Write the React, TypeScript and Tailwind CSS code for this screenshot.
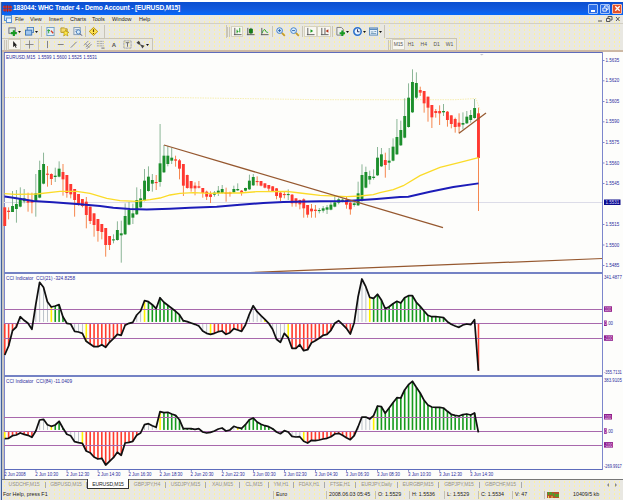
import React from "react";

type Candle = [number, number, number, number];

// Each row: high, body top, body bottom, low, in thirds of a pixel; a leading minus on the high marks a falling candle.
const early: Candle[] = [
  [-262, 262, 318, 318], [-262, 272, 276, 298], [213, 258, 276, 276], [210, 252, 267, 308], [202, 235, 260, 262],
  [207, 235, 244, 250], [-218, 240, 248, 275], [-218, 240, 248, 280], [162, 220, 245, 290], [122, 150, 233, 235],
  [98, 132, 191, 193], [-138, 161, 164, 200], [-160, 162, 177, 195], [143, 167, 171, 186], [124, 146, 170, 172],
  [-132, 156, 178, 227], [-165, 165, 219, 233], [-192, 192, 223, 235], [-207, 207, 240, 290], [-222, 222, 252, 257],
  [-237, 237, 258, 262], [-231, 245, 285, 325], [-260, 260, 303, 312], [-280, 280, 315, 350], [-297, 297, 333, 365],
  [-312, 312, 336, 358], [-324, 324, 375, 410], [-348, 348, 375, 390], [343, 358, 361, 370], [304, 330, 360, 362],
  [302, 340, 346, 428], [250, 288, 343, 345], [246, 270, 314, 316], [251, 280, 293, 312], [202, 240, 283, 285],
  [207, 235, 262, 264], [147, 182, 242, 244], [139, 170, 213, 215], [162, 180, 191, 215], [-165, 186, 189, 210],
  [12, 130, 186, 200], [75, 107, 157, 159], [78, 107, 132, 139], [83, 113, 122, 132], [-107, 118, 122, 140],
  [-117, 121, 146, 178], [-132, 132, 197, 228], [-164, 165, 204, 206], [-183, 183, 205, 215], [-187, 197, 205, 226],
  [-183, 199, 203, 205], [-204, 204, 219, 233], [-212, 215, 230, 240], [-214, 223, 231, 249], [213, 218, 224, 230],
  [198, 212, 219, 228], [195, 207, 219, 221], [-203, 217, 222, 245], [-215, 217, 222, 230], [197, 207, 217, 219],
  [190, 207, 211, 213], [-210, 212, 219, 227], [203, 204, 212, 214], [164, 182, 208, 210], [162, 171, 196, 198],
  [-169, 183, 186, 197], [-183, 183, 197, 199], [-190, 190, 203, 205], [-195, 195, 206, 215], [-198, 199, 213, 215],
  [-204, 205, 228, 238], [-215, 218, 233, 243], [-213, 222, 225, 235], [208, 222, 225, 240], [-222, 224, 250, 260],
  [-235, 235, 250, 260], [-239, 240, 253, 268], [-235, 238, 265, 293], [-255, 255, 284, 293], [-252, 266, 274, 293],
  [-255, 269, 273, 293], [264, 270, 273, 280], [258, 265, 272, 278], [255, 262, 269, 282],
];
const late: Candle[] = [
  [455, 464, 479, 481], [438, 457, 470, 472], [443, 448, 458, 463], [445, 449, 452, 457], [-441, 449, 464, 476],
  [-455, 458, 478, 494], [452, 460, 465, 470], [395, 430, 466, 468], [343, 375, 450, 455], [350, 366, 413, 415],
  [362, 378, 389, 403], [358, 380, 384, 389], [291, 323, 376, 378], [294, 313, 349, 351], [-308, 330, 345, 383],
  [294, 332, 338, 360], [265, 290, 332, 334], [207, 261, 313, 315], [212, 240, 286, 288], [145, 198, 263, 265],
  [100, 143, 231, 233], [58, 96, 187, 189], [67, 99, 143, 147], [-110, 120, 128, 138], [-123, 123, 160, 188],
  [-140, 140, 173, 215], [-165, 165, 202, 234], [-177, 183, 189, 203], [-166, 183, 190, 225], [162, 183, 187, 198],
  [-183, 185, 210, 230], [-196, 196, 222, 235], [-203, 207, 231, 248], [-190, 218, 230, 250], [187, 219, 224, 238],
  [183, 200, 220, 222], [180, 195, 210, 218], [147, 174, 204, 206], [-173, 190, 324, 483],
];
const candles = [
  ...early.map((c) => ({ c, base: 120 })),
  ...late.map((c) => ({ c, base: 50 })),
];
const cx = (i: number) => 4.7 + 3.883 * i;

const cci21 = [
  255, 228, 182, 171, 140, 151, 160, 178, 103, 37, 52, 95, 111, 108, 104, 140, 160, 162, 184, 186, 190, 214, 222, 230,
  230, 224, 232, 217, 206, 193, 196, 166, 160, 157, 135, 123, 92, 95, 104, 116, 83, 97, 106, 115, 124, 134, 152, 155,
  159, 163, 168, 183, 190, 193, 190, 185, 183, 193, 188, 176, 180, 184, 165, 133, 107, 125, 137, 148, 160, 178, 208,
  217, 190, 203, 235, 235, 224, 242, 239, 218, 212, 205, 196, 193, 181, 160, 152, 163, 175, 192, 158, 80, 27, 50, 82,
  85, 73, 90, 116, 110, 101, 94, 99, 83, 77, 77, 97, 109, 123, 136, 140, 140, 141, 143, 155, 163, 168, 172, 165, 162,
  164, 149, 302,
];
const cci84 = [
  191, 190, 182, 180, 174, 178, 181, 187, 168, 135, 133, 149, 154, 150, 139, 159, 178, 182, 200, 203, 205, 228, 233,
  246, 252, 250, 270, 259, 248, 232, 241, 204, 202, 199, 181, 174, 149, 146, 152, 157, 110, 113, 112, 117, 121, 134,
  161, 161, 161, 163, 161, 171, 174, 172, 168, 162, 159, 168, 165, 154, 158, 160, 149, 134, 129, 141, 148, 152, 155,
  161, 171, 176, 167, 171, 184, 186, 185, 199, 204, 196, 197, 195, 192, 190, 185, 177, 175, 181, 188, 194, 182, 155,
  126, 126, 132, 122, 93, 95, 115, 99, 83, 68, 69, 45, 29, 19, 37, 54, 76, 90, 96, 97, 97, 99, 109, 118, 121, 123,
  119, 117, 120, 114, 172,
];
const gray = "#b4bcc4";
const red = "#ff3a2c";
const green = "#159a1c";
const yellow = "#fff200";
// Run-length colouring of the histograms: [last index of the run, colour]
const runs21: [number, string][] = [
  [3, red], [11, gray], [12, yellow], [15, green], [20, gray], [21, yellow], [32, red], [35, gray], [36, yellow],
  [48, green], [52, gray], [53, yellow], [61, red], [66, gray], [67, yellow], [72, gray], [73, yellow], [85, red],
  [86, gray], [89, red], [93, gray], [94, yellow], [113, green], [121, gray], [122, red],
];
const runs84: [number, string][] = [
  [0, yellow], [7, red], [11, gray], [12, yellow], [15, green], [19, gray], [20, yellow], [34, red], [39, gray],
  [40, yellow], [49, green], [59, gray], [60, yellow], [69, green], [76, gray], [77, yellow], [90, red], [94, gray],
  [95, yellow], [121, green], [122, gray],
];
const colorAt = (runs: [number, string][], i: number) => (runs.find((r) => i <= r[0]) ?? runs[0])[1];

function Label({ x, y, w, children, fill = "#2a2a9c", size = 5.4 }: {
  x: number; y: number; w: number; children: string; fill?: string; size?: number;
}) {
  return (
    <text x={x} y={y} textLength={w} lengthAdjust="spacingAndGlyphs" fontSize={size} fill={fill} xmlSpace="preserve">
      {children}
    </text>
  );
}

function Cci({ values, runs, base, zero, hi, lo }: {
  values: number[]; runs: [number, string][]; base: number; zero: number; hi: number; lo: number;
}) {
  const z = base + zero / 3;
  return (
    <g>
      {values.map((v, i) => {
        const c = colorAt(runs, i);
        const up = v < zero;
        const y = base + v / 3;
        const start = up ? z - 1.4 : z + 0.7;
        const h = up ? start - y : y - start;
        if (h <= 0) return null;
        return <rect key={i} x={cx(i) - (c === gray ? 0.4 : 0.75)} y={up ? y : start} width={c === gray ? 0.9 : 1.6} height={h} fill={c} />;
      })}
      {[hi, zero, lo].map((l) => (
        <rect key={l} x={4} width={598.5} y={Math.floor(base + l / 3)} height={1} fill="#a868ac" />
      ))}
      <polyline
        points={values.map((v, i) => `${cx(i).toFixed(1)},${(base + v / 3).toFixed(1)}`).join(" ")}
        fill="none" stroke="#111" strokeWidth={1.75} strokeLinejoin="round"
      />
    </g>
  );
}

const prices: [string, number][] = [
  ["1.5635", 60], ["1.5620", 80.3], ["1.5605", 101], ["1.5590", 121.3], ["1.5575", 142], ["1.5560", 162.5],
  ["1.5545", 183], ["1.5515", 224], ["1.5500", 244.5], ["1.5485", 265],
];
const times = [
  "2 Jun 2008", "2 Jun 10:30", "2 Jun 12:30", "2 Jun 14:30", "2 Jun 16:30", "2 Jun 18:30", "2 Jun 20:30", "2 Jun 22:30",
  "3 Jun 00:30", "3 Jun 02:30", "3 Jun 04:30", "3 Jun 06:30", "3 Jun 08:30", "3 Jun 10:30", "3 Jun 12:30", "3 Jun 14:30",
];

function Chart() {
  return (
    <svg className="block h-[427px] w-[621px] shrink-0 overflow-visible" viewBox="2 52 621 427" fontFamily="'Liberation Sans', Arial, sans-serif">
      <rect x={2} y={52} width={621} height={427} fill="#fdfdfb" />
      <rect x={2} y={52} width={2} height={427} fill="#c6c4c0" />
      <rect x={4} y={52} width={1} height={427} fill="#7c86cc" />
      <rect x={4} y={52} width={599} height={1} fill="#5e6cbc" />
      <rect x={4} y={202} width={599} height={1} fill="#dcdce8" />
      <path d="M5 97.5H170L320 99.7H455L476 98.5L480 110" fill="none" stroke="#f4eaa0" strokeWidth={0.8} strokeDasharray="1.5 1" />
      {candles.map(({ c, base }, i) => {
        const down = c[0] < 0;
        const y = (v: number) => base + v / 3;
        const x = cx(i);
        return (
          <g key={i}>
            <rect x={x - 0.4} y={y(Math.abs(c[0]))} width={0.9} height={(c[3] - Math.abs(c[0])) / 3} fill={down ? "#f57a3c" : "#7fae8c"} />
            <rect x={x - 1.4} y={y(c[1])} width={2.9} height={Math.max(1.1, (c[2] - c[1]) / 3)} fill={down ? "#ff3830" : "#1c8f2c"} />
          </g>
        );
      })}
      <path d="M479.9 54L483.6 54L481.8 55.6Z" fill="#c4c4cc" />
      <polyline
        points="4.5,193.7 15,194.3 36.7,194 60,191.3 76.7,191.3 90,193.3 106.7,198.3 120,200.7 136.7,201.3 150,199.7 160,198 170,195 180,193.3 193.3,192.7 210,193.3 223.3,193 240,193 256.7,191.7 286.7,191.3 300,193 320,195.3 346.7,196.7 360,196 373.3,194.7 380,192.7 393.3,189.7 403.3,185.7 420,175.7 440,167.3 460,162.3 478.5,157.7"
        fill="none" stroke="#fbdb28" strokeWidth={1.3}
      />
      <polyline
        points="4.5,196.5 13.3,197.7 33.3,201 53.3,202.3 80,204.3 100,206 113.3,207.7 130,209 146.7,209.5 170,208.7 190,207.7 216.7,206.7 240,204.7 263.3,203 283.3,202 320,201.3 346.7,201 376.7,199 400,197 408.3,196.7 430,191.7 453.3,187 478.5,183.4"
        fill="none" stroke="#1c1cb8" strokeWidth={1.9}
      />
      <g stroke="#96582f" strokeWidth={1.25}>
        <line x1={164} y1={145} x2={443} y2={227.7} />
        <line x1={459} y1={133.3} x2={486} y2={113} />
        <line x1={250} y1={272.5} x2={602.5} y2={258.5} />
      </g>
      <Cci values={cci21} runs={runs21} base={270} zero={160} hi={118} lo={205} />
      <Cci values={cci84} runs={runs84} base={375} zero={169} hi={127} lo={211} />
      <rect x={4} y={272} width={599} height={2} fill="#7482c4" />
      <rect x={4} y={375} width={599} height={2} fill="#7482c4" />
      <rect x={4} y={469} width={599} height={1} fill="#5e6cbc" />
      <rect x={602} y={52} width={1} height={418} fill="#7c86cc" />

      <Label x={6} y={58.6} w={91}>{"EURUSD,M15  1.5599 1.5600 1.5525 1.5531"}</Label>
      <Label x={6} y={280.3} w={69}>{"CCI Indicator  CCI(21) -324.8258"}</Label>
      <Label x={6} y={383.3} w={66}>{"CCI Indicator  CCI(84) -11.0409"}</Label>
      {prices.map(([p, y]) => (
        <g key={p}>
          <rect x={603} y={y} width={1.5} height={1} fill="#7c86cc" />
          <Label x={605.5} y={y + 2.1} w={13.8}>{p}</Label>
        </g>
      ))}
      <rect x={604} y={199.5} width={16.5} height={5.5} fill="#0c0c8c" />
      <Label x={605.5} y={204.2} w={13.8} fill="#d8d8ff" size={5}>1.5531</Label>
      <Label x={604} y={279} w={17.8} size={5}>341.4877</Label>
      <Label x={604} y={374} w={17.8} size={5}>-355.7131</Label>
      <Label x={604} y={381.8} w={17.8} size={5}>383.9105</Label>
      <Label x={604} y={468} w={17.8} size={5}>-269.9917</Label>
      {[309, 416.7].map((y) => (
        <g key={y}>
          <rect x={604} y={y - 2.7} width={8} height={5.5} fill="#8c1c8c" />
          <Label x={604.7} y={y + 1.8} w={6.4} fill="#f4d8f4" size={5}>100</Label>
        </g>
      ))}
      {[338, 444.8].map((y) => (
        <g key={y}>
          <rect x={604} y={y - 2.7} width={9} height={5.5} fill="#8c1c8c" />
          <Label x={604.5} y={y + 1.8} w={8} fill="#f4d8f4" size={5}>-100</Label>
        </g>
      ))}
      {[323.2, 431].map((y) => (
        <g key={y}>
          <rect x={604} y={y - 2.7} width={2.8} height={5.5} fill="#8c1c8c" />
          <Label x={604.2} y={y + 1.8} w={2.4} fill="#f4d8f4" size={5}>0</Label>
          <Label x={607} y={y + 1.8} w={6}>.00</Label>
        </g>
      ))}
      {times.map((t, i) => (
        <g key={t}>
          <rect x={4.5 + i * 31.06} y={470} width={0.8} height={1.8} fill="#5e6cbc" />
          <Label x={i ? 4.2 + i * 31.06 : 4.2} y={476.2} w={i ? 23 : 21.5}>{t}</Label>
        </g>
      ))}
    </svg>
  );
}

function Icon({ w, children, on = false, arrow = false }: { w: number; children: React.ReactNode; on?: boolean; arrow?: boolean }) {
  return (
    <div className={`flex h-[11px] shrink-0 items-center justify-center ${on ? "border border-[#d6d2c0] bg-[#f8f7f2]" : ""}`} style={{ width: w }}>
      <svg viewBox="0 0 10 10" className="h-[9px] w-[9px] shrink-0 overflow-visible" fill="none" strokeWidth={1}>{children}</svg>
      {arrow && <svg viewBox="0 0 3 2" className="ml-px h-[2px] w-[3px] shrink-0"><path d="M0 0H3L1.5 2Z" fill="#111" /></svg>}
    </div>
  );
}
const Sep = () => <div className="mx-px h-[11px] w-px shrink-0 bg-[#c9c5b6]" />;
const Grip = () => <div className="mr-px h-[10px] w-[3px] shrink-0 border-x border-[#c9c5b6]" />;

function Axes({ children }: { children: React.ReactNode }) {
  return <><path d="M2 1V9M1 8.5H9.5" stroke="#555" />{children}</>;
}

function ToolbarOne() {
  return (
    <div className="flex h-[13px] items-center">
      <div className="flex h-[13px] w-[103px] shrink-0 items-center border-r border-[#c9c5b6] pl-1">
        <Icon w={17} arrow><rect x={1} y={1} width={7} height={6} fill="#dfeee0" stroke="#667" /><path d="M6.5 3.5V10M3.2 6.8H9.8" stroke="#179a22" strokeWidth={2.4} /></Icon>
        <Icon w={17} arrow><rect x={2.5} y={0.5} width={7} height={5.5} fill="#cfe2f6" stroke="#4a80bd" /><rect x={0.5} y={3.5} width={7} height={5.5} fill="#9fc6ee" stroke="#3a70b0" /></Icon>
        <Sep />
        <Icon w={15}><rect x={1} y={0.5} width={8} height={9} fill="#e5f1fa" stroke="#6b9ac4" /><path d="M3 7V3M1.5 4.5L3 3L4.5 4.5" stroke="#179a22" /><path d="M5.5 4L8 7" stroke="#d63a22" strokeWidth={1.5} /></Icon>
        <Icon w={13}><path d="M1 1H5L6 2H8V6H1Z" fill="#f5da6c" stroke="#b49524" /><path d="M6.5 3L7.5 5.5L10 5.8L8 7.3L8.8 10L6.5 8.5L4 10L4.8 7.3L3 5.8L5.5 5.5Z" fill="#ffe94a" stroke="#b08f00" strokeWidth={0.7} /></Icon>
        <Icon w={13}><rect x={1} y={0.5} width={7} height={8} fill="#e6edf4" stroke="#8098b0" /><path d="M2.5 3H7M2.5 5H5" stroke="#8098b0" /><circle cx={6} cy={5.5} r={2.3} fill="#d5eafa" stroke="#4a80bd" /><path d="M8 7.5L10 9.7" stroke="#446" /></Icon>
        <Sep />
        <Icon w={13}><path d="M5 0.5L9.7 5L5 9.5L0.3 5Z" fill="#ffe34e" stroke="#b98e00" /><path d="M5 2.4V5.6M5 6.6V7.8" stroke="#6b4a00" strokeWidth={1.3} /></Icon>
      </div>
      <div className="w-[121px] shrink-0" />
      <div className="flex h-[13px] w-[159px] shrink-0 items-center border-x border-[#c9c5b6]">
        <Grip />
        <Icon w={12} on><Axes><path d="M4.5 7V3M7.5 6V1M4.5 5H6" stroke="#159a1c" /></Axes></Icon>
        <Icon w={14}><Axes><rect x={4} y={2.5} width={3} height={4} fill="#159a1c" stroke="#126a18" /><path d="M5.5 1V8" stroke="#126a18" /></Axes></Icon>
        <Icon w={14}><Axes><path d="M2.5 6.5C4 2 5.5 2 6.3 4.5C7 6 8 6 9 6" stroke="#159a1c" /></Axes></Icon>
        <Sep />
        <Icon w={13}><path d="M6.5 6.5L9.8 9.8" stroke="#c89c28" strokeWidth={2} /><circle cx={4} cy={4} r={3.2} fill="#d9edfc" stroke="#3a78c8" /><path d="M2.3 4H5.7M4 2.3V5.7" stroke="#225ca8" /></Icon>
        <Icon w={14}><path d="M6.5 6.5L9.8 9.8" stroke="#c89c28" strokeWidth={2} /><circle cx={4} cy={4} r={3.2} fill="#d9edfc" stroke="#3a78c8" /><path d="M2.3 4H5.7" stroke="#225ca8" /></Icon>
        <Sep />
        <Icon w={13} on><Axes><path d="M5 2.5L8 4.5L5 6.5Z" fill="#159a1c" /></Axes></Icon>
        <Icon w={14} on><Axes><path d="M5.5 1V8" stroke="#555" /><path d="M9.3 2.5L6.2 4.5L9.3 6.5Z" fill="#b5331c" /></Axes></Icon>
        <Sep />
        <Icon w={17} arrow><path d="M1 0.5H6L8 2.5V9H1Z" fill="#eee" stroke="#777" /><path d="M7 4V10M4 7H10" stroke="#179a22" strokeWidth={2.2} /></Icon>
        <Icon w={16} arrow><circle cx={5} cy={5} r={4.1} fill="#e8f4ff" stroke="#2d71cc" strokeWidth={1.7} /><path d="M5 2.5V5.3H7.2" stroke="#225" /></Icon>
        <Icon w={17} arrow><rect x={0.5} y={1} width={9} height={8} fill="#e9f2fb" stroke="#5789bb" /><path d="M1 2.5H9" stroke="#5789bb" strokeWidth={1.6} /><path d="M2 5.5H5M2 7.3H8M6 5H8" stroke="#6c96b5" /></Icon>
      </div>
    </div>
  );
}

function ToolbarTwo() {
  return (
    <div className="flex h-[12px] items-center text-[5px] text-[#555]">
      <div className="flex h-[12px] w-[151px] shrink-0 items-center border-r border-t border-[#c9c5b6] pl-0.5">
        <Grip />
        <Icon w={13} on><path d="M3.5 1V8L5.2 6.5L6.5 9L7.3 8.6L6.2 6H8Z" fill="#222" /></Icon>
        <Icon w={16}><path d="M5 0.5V9.5M0.5 5H9.5" stroke="#777" strokeWidth={0.9} /></Icon>
        <Sep />
        <Icon w={14}><path d="M5 1V9" stroke="#777" /></Icon>
        <Icon w={13}><path d="M2 5H8.5" stroke="#777" /></Icon>
        <Icon w={13}><path d="M2 8.5L8.5 2" stroke="#777" /></Icon>
        <Icon w={14}><path d="M1 6L6 1M3 8L8 3M4 10L9.5 4.5M2.5 4L7 8.5" stroke="#888" /></Icon>
        <Icon w={13}><path d="M1 1.5H9M1 4H9M1 6.5H9" stroke="#888" strokeDasharray="1 .6" /><path d="M6 9H9.5" stroke="#666" /></Icon>
        <div className="flex w-[14px] justify-center text-[6px] font-bold">A</div>
        <Icon w={12}><rect x={1} y={1} width={8} height={8} stroke="#888" strokeDasharray="1 .6" /><path d="M3 3H7M5 3V7.5" stroke="#666" /></Icon>
        <Icon w={19} arrow><path d="M0.5 3L3 0.7L5 3.5L3 5Z" fill="#444" /><path d="M5 5L9.5 6.5L7 9.5Z" fill="#444" /><path d="M3 4L7 7" stroke="#444" /></Icon>
      </div>
      <div className="w-[233px] shrink-0" />
      <div className="flex h-[12px] w-[71px] shrink-0 items-center border-r border-t border-[#c9c5b6] pl-0.5">
        <Grip />
        <div className="flex h-[11px] w-[13px] items-center justify-center border border-[#d6d2c0] bg-[#f8f7f2] tracking-[-0.2px]">M15</div>
        {["H1", "H4", "D1", "W1"].map((t) => <div key={t} className="w-[13.5px] text-center">{t}</div>)}
      </div>
    </div>
  );
}

const menus: [string, number][] = [["File", 15], ["View", 19], ["Insert", 21], ["Charts", 22], ["Tools", 20], ["Window", 27], ["Help", 20]];
const tabs: [string, number][] = [
  ["USDCHF,M15", 43], ["GBPUSD,M15", 41], ["EURUSD,M15", 42], ["GBPJPY,H4", 37], ["USDJPY,M15", 40], ["XAU,M15", 34],
  ["CL,M15", 29], ["YM,H1", 25], ["FDAX,H1", 31], ["FTSE,H1", 31], ["EURJPY,Daily", 42], ["EURGBP,M15", 41],
  ["GBPJPY,M15", 41], ["GBPCHF,M15", 42],
];
const status: [string, number][] = [
  ["Euro", 53], ["2008.06.03 05:45", 49], ["O: 1.5529", 34], ["H: 1.5536", 35], ["L: 1.5529", 34], ["C: 1.5534", 34], ["V: 47", 32],
];

export default function App() {
  return (
    <div className="flex h-[501px] w-[625px] overflow-hidden bg-white font-['Liberation_Sans',Arial,sans-serif] text-[5.5px] leading-none whitespace-nowrap text-[#222]">
      <div className="mt-[2px] h-[498px] w-[2px] shrink-0 border-r border-[#41609c] bg-[#c8d4ea]" />
      <div className="flex h-[500px] w-[621px] shrink-0 flex-col bg-[#e9e8e2] bg-[radial-gradient(#fff29c_0.6px,transparent_0.9px)] bg-[length:5px_4px]">
        <div className="h-[2px] shrink-0 bg-white" />
        <div className="flex h-[13px] shrink-0 items-center bg-linear-to-b from-[#0b4fd0] via-[#1258dc] to-[#0468fa] text-white">
          <svg viewBox="0 0 9 7" className="ml-[1px] h-[7px] w-[9px]"><path d="M0 2H9M0 5H9" stroke="#e93423" strokeWidth={1.7} /><path d="M2 0V7M4.5 0V7M7 0V7" stroke="#a32525" /></svg>
          <div className="ml-[1px] flex-1 text-[6.6px] font-bold tracking-[-0.14px]">183044: WHC Trader 4 - Demo Account - [EURUSD,M15]</div>
          <div className="mr-[1px] flex gap-[2px]">
            <div className="flex h-[10px] w-[10px] items-end justify-center rounded-[1px] border border-[#a7c6f8] bg-[#2b6de8]"><div className="mb-[1px] h-[1.5px] w-[4px] bg-white" /></div>
            <div className="flex h-[10px] w-[10px] items-center justify-center rounded-[1px] border border-[#a7c6f8] bg-[#2b6de8]"><svg viewBox="0 0 8 8" className="h-[7px] w-[7px]" fill="none" stroke="white"><path d="M3 3V1H7V5H5M1 3.5H5V7H1Z" /></svg></div>
            <div className="flex h-[10px] w-[10px] items-center justify-center rounded-[1px] border border-[#f8c0a8] bg-[#e2512c]"><svg viewBox="0 0 8 8" className="h-[7px] w-[7px]" stroke="white" strokeWidth={1.5}><path d="M1.5 1.5L6.5 6.5M6.5 1.5L1.5 6.5" /></svg></div>
          </div>
        </div>
        <div className="flex h-[9px] shrink-0 items-center border-b border-[#d2cfc4]">
          <svg viewBox="0 0 8 8" className="mr-[3px] ml-[2px] h-[8px] w-[8px]"><rect x={0.5} y={0.5} width={7} height={5} fill="#cfe4fa" stroke="#5b93d0" /><rect x={2.5} y={3} width={5} height={4.5} fill="#eaf4ff" stroke="#5b93d0" /></svg>
          {menus.map(([m, w]) => <div key={m} className="shrink-0 pt-[2px]" style={{ width: w }}>{m}</div>)}
          <svg viewBox="0 0 25 8" className="mr-[1px] ml-auto h-[8px] w-[25px]" fill="none" stroke="#555"><path d="M1 6H5M11 3V1.5H15V5H13.5M9.5 3.5H13V6.5H9.5ZM19 2L22.5 6M22.5 2L19 6" /></svg>
        </div>
        <div className="flex h-[26px] shrink-0 flex-col pt-px"><ToolbarOne /><ToolbarTwo /></div>
        <div className="h-[2px] shrink-0 bg-[#cdb9a5]" />
        <Chart />
        <div className="flex h-[10px] shrink-0 border-t border-[#777] pl-[1px] text-[5.1px] tracking-[-0.12px] text-[#96948c]">
          {tabs.map(([t, w]) => t === "EURUSD,M15" ? (
            <div key={t} className="-mt-px h-[10px] shrink-0 border-x border-b border-[#333] bg-white pt-[3px] text-center text-[#222]" style={{ width: w }}>{t}</div>
          ) : (
            <div key={t} className="flex h-[9px] shrink-0 items-center justify-center" style={{ width: w }}>
              <span className="flex-1 text-center">{t}</span><span className="h-[6px] w-px bg-[#aaa]" />
            </div>
          ))}
          <svg viewBox="0 0 14 8" className="mt-px mr-1 ml-auto h-[8px] w-[14px]" fill="#888"><path d="M4 2L2 4L4 6ZM10 2L12 4L10 6Z" /></svg>
        </div>
        <div className="flex h-[11px] shrink-0 items-center text-[5.3px]">
          <div className="w-[271px] shrink-0 pl-[1px] text-[5.4px]">For Help, press F1</div>
          {status.map(([t, w]) => (
            <div key={t} className="flex h-[8px] shrink-0 items-center border-l border-[#c4c0b0] pl-[2px]" style={{ width: w }}>{t}</div>
          ))}
          <div className="flex h-[8px] w-[22px] shrink-0 items-center border-l border-[#c4c0b0] pl-[2px]">
            <svg viewBox="0 0 12 6" className="h-[6px] w-[12px]"><rect width={12} height={6} fill="#b6502c" /><path d="M1.5 0V3M4 0V3M6.5 1V4M9 2V5M11 2V5" stroke="#37b02a" strokeWidth={1.5} /><path d="M1.5 4V6M5 4V6" stroke="#f1d54c" /></svg>
          </div>
          <div className="pl-[7px]">10409/5 kb</div>
        </div>
      </div>
    </div>
  );
}
